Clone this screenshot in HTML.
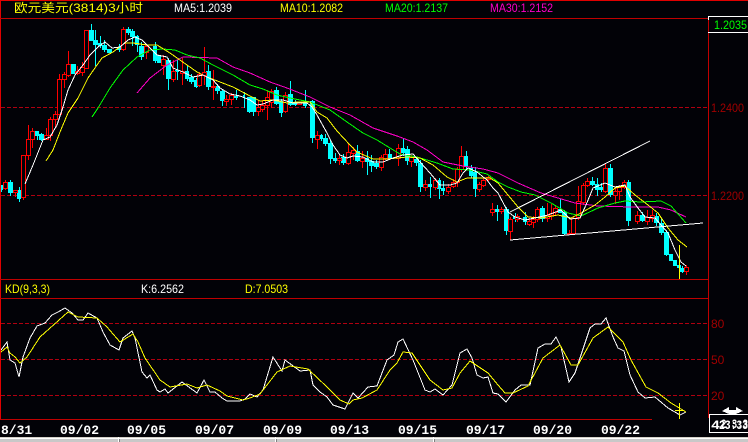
<!DOCTYPE html>
<html><head><meta charset="utf-8"><title>KD</title>
<style>
html,body{margin:0;padding:0;background:#020207;width:748px;height:442px;overflow:hidden}
svg{display:block;position:absolute;left:0;top:0}
text{font-family:"Liberation Sans","Noto Sans CJK SC",sans-serif;font-size:12px}
.d{font-family:"Liberation Mono",monospace;font-weight:bold;font-size:13px;fill:#fff}
</style></head><body>
<svg width="748" height="442" viewBox="0 0 748 442" xmlns="http://www.w3.org/2000/svg" shape-rendering="crispEdges">
<rect width="748" height="442" fill="#020207"/>
<!-- dashed grid -->
<g stroke="#b00010" stroke-width="1" stroke-dasharray="4 2" fill="none">
<path d="M1 107.5H708M1 195.5H708M1 323.5H708M1 359.5H708M1 395.5H708"/>
</g>
<!-- cyan wicks -->
<path fill="none" stroke="#00ffff" d="M1.5 185V192M10.5 180V196M19.5 187V202M37.5 131V140M41.5 133V141M73.5 64V74M91.5 24V41M95.5 30V66M100.5 36V48M104.5 40V52M119.5 44V52M128.5 27V35M132.5 29V46M137.5 35V52M141.5 42V60M155.5 42V63M159.5 55V63M168.5 58V90M177.5 60V80M187.5 65V81M191.5 74V84M196.5 78V88M208.5 65V90M217.5 84V94M222.5 89V106M236.5 90V100M244.5 92V108M249.5 97V113M253.5 101V116M276.5 87V105M281.5 99V117M290.5 81V106M295.5 100V106M305.5 90V108M312.5 100V143M321.5 134V141M325.5 134V146M330.5 140V164M335.5 153V163M343.5 154V165M357.5 145V162M367.5 151V175M371.5 155V172M376.5 160V169M389.5 149V160M403.5 138V156M407.5 146V165M416.5 157V166M420.5 160V192M430.5 177V198M439.5 178V199M443.5 181V195M466.5 151V170M471.5 165V178M475.5 167V197M497.5 205V221M506.5 207V235M515.5 213V222M525.5 212V225M542.5 206V222M560.5 199V213M564.5 210V235M592.5 177V186M597.5 178V196M601.5 183V192M610.5 164V197M628.5 180V226M642.5 212V222M656.5 213V226M661.5 218V235M666.5 230V256M682.5 266V273"/>
<!-- cyan bodies -->
<path fill="#00ffff" d="M1 185h2v5h-2zM8 182h5v11h-5zM17 190h4v9h-4zM35 131h4v5h-4zM39 134h5v6h-5zM71 64h5v10h-5zM89 30h5v11h-5zM93 40h5v5h-5zM98 43h4v3h-4zM102 45h5v5h-5zM107 49h5v4h-5zM117 47h4v3h-4zM126 29h5v4h-5zM130 31h5v6h-5zM135 36h4v9h-4zM139 46h5v11h-5zM153 46h4v15h-4zM157 55h4v8h-4zM166 60h5v19h-5zM175 70h4v2h-4zM185 71h4v8h-4zM189 77h5v5h-5zM194 80h4v7h-4zM206 71h5v16h-5zM215 86h5v5h-5zM220 91h5v10h-5zM234 96h4v2h-4zM243 95h2v2h-2zM247 97h9v15h-9zM274 90h5v14h-5zM279 101h4v12h-4zM288 94h5v11h-5zM293 103h4v2h-4zM303 103h4v3h-4zM310 101h5v37h-5zM319 135h4v4h-4zM323 138h5v6h-5zM328 143h5v16h-5zM333 158h4v3h-4zM341 157h5v6h-5zM355 151h5v10h-5zM365 158h4v4h-4zM369 161h5v5h-5zM374 163h5v4h-5zM387 154h5v5h-5zM401 148h4v5h-4zM405 149h5v12h-5zM414 159h5v4h-5zM418 163h5v24h-5zM428 184h4v3h-4zM437 180h4v9h-4zM441 188h4v3h-4zM464 156h4v11h-4zM469 168h4v8h-4zM473 172h4v17h-4zM495 209h4v3h-4zM504 209h5v22h-5zM513 216h5v3h-5zM523 217h4v5h-4zM540 208h5v11h-5zM558 209h4v4h-4zM562 212h5v22h-5zM590 181h5v4h-5zM595 184h4v6h-4zM599 187h5v3h-5zM608 168h5v27h-5zM626 182h5v39h-5zM640 215h5v6h-5zM654 216h5v7h-5zM659 223h5v10h-5zM664 232h5v23h-5zM669 254h4v7h-4zM673 260h4v6h-4zM677 265h4v3h-4zM680 268h5v4h-5z"/>
<!-- red wicks -->
<path fill="none" stroke="#ff0000" d="M5.5 180V190M15.5 190V197M23.5 155V200M28.5 125V160M32.5 128V148M46.5 128V139M50.5 117V141M55.5 111V127M59.5 74V114M64.5 72V88M68.5 51V77M77.5 66V75M82.5 62V76M86.5 30V68M123.5 27V51M146.5 44V59M163.5 55V75M173.5 60V82M182.5 58V85M199.5 72V87M204.5 47V85M213.5 70V100M226.5 95V106M231.5 93V105M258.5 100V116M262.5 100V112M267.5 90V120M271.5 89V108M285.5 92V113M317.5 131V149M339.5 155V165M348.5 143V165M353.5 147V160M362.5 151V168M381.5 155V171M385.5 149V160M398.5 144V166M411.5 155V167M425.5 180V191M435.5 178V190M448.5 184V194M453.5 179V188M457.5 167V187M461.5 146V172M479.5 182V192M483.5 178V187M488.5 176V181M492.5 203V216M501.5 207V214M510.5 217V240M517.5 214V222M529.5 218V226M533.5 216V228M537.5 207V222M547.5 203V222M551.5 204V220M555.5 205V215M569.5 230V235M573.5 216V235M578.5 186V220M583.5 183V205M587.5 178V187M605.5 163V193M615.5 188V204M619.5 185V200M624.5 180V189M637.5 211V224M647.5 210V225M652.5 210V222M686.5 265V275"/>
<!-- red bodies (hollow, black inside) -->
<path fill="#020207" stroke="#ff0000" d="M3.5 182.500h4v6h-4zM13.500 190.500h4v2h-4zM21.500 155.500h4v42h-4zM26.500 139.500h4v16h-4zM30.500 131.500h4v8h-4zM44.500 135.500h4v4h-4zM48.500 119.500h4v16h-4zM53.500 114.500h4v5h-4zM57.500 79.500h4v35h-4zM62.500 74.500h4v5h-4zM66.500 64.500h4v11h-4zM75.500 71.500h4v2h-4zM80.500 67.500h4v5h-4zM84.500 30.500h4v38h-4zM121.500 29.500h4v20h-4zM144.500 46.500h4v6h-4zM161.500 59.500h4v6h-4zM171.500 71.500h4v8h-4zM180.500 71.500h4v2h-4zM197.500 74.500h4v11h-4zM202.500 72.500h4v3h-4zM211.500 86.500h4v1h-4zM224.500 99.500h4v2h-4zM229.500 95.500h4v4h-4zM256.500 107.500h4v4h-4zM260.500 105.500h4v4h-4zM265.500 97.500h4v8h-4zM269.500 91.500h4v11h-4zM283.500 95.500h4v16h-4zM297.500 102.500h4v2h-4zM315.500 135.500h4v4h-4zM337.500 158.500h4v2h-4zM346.500 152.500h4v11h-4zM351.500 150.500h4v3h-4zM360.500 158.500h4v3h-4zM379.500 157.500h4v10h-4zM383.500 154.500h4v4h-4zM396.500 148.500h4v10h-4zM409.500 157.500h4v4h-4zM423.500 184.500h4v3h-4zM433.500 180.500h4v7h-4zM446.500 187.500h4v4h-4zM451.500 182.500h4v4h-4zM455.500 169.500h4v13h-4zM459.500 156.500h4v13h-4zM477.500 184.500h4v5h-4zM481.500 180.500h4v5h-4zM486.500 177.500h4v2h-4zM490.500 209.500h4v3h-4zM499.500 209.500h4v2h-4zM508.500 219.500h4v12h-4zM515.500 216.500h4v3h-4zM527.500 221.500h4v3h-4zM531.500 219.500h4v3h-4zM535.500 209.500h4v10h-4zM545.500 215.500h4v3h-4zM549.500 213.500h4v2h-4zM553.500 208.500h4v4h-4zM567.500 233.500h4v1h-4zM571.500 218.500h4v15h-4zM576.500 201.500h4v16h-4zM581.500 185.500h4v17h-4zM585.500 181.500h4v4h-4zM603.500 168.500h4v23h-4zM613.500 191.500h4v4h-4zM617.500 187.500h4v4h-4zM622.500 182.500h4v5h-4zM635.500 215.500h4v6h-4zM645.500 217.500h4v4h-4zM650.500 215.500h4v3h-4zM684.500 267.500h4v4h-4z"/>
<!-- moving averages -->
<g fill="none" stroke-width="1">
<polyline stroke="#ff00c8" points="137,93 150,78 167,65 183,57 217,58 233,67 250,73 270,82 287,88 310,97 330,107 350,115 373,128 397,136 413,142 427,150 443,162 463,166 483,169 498,173 518,183 541,193 558,198 575,203 598,206 631,207 658,207 671,210 686,217"/>
<polyline stroke="#00ff00" points="92,117 98,108 110,88 123,70 137,57 150,50 163,49 175,50 187,55 200,58 213,65 233,75 250,85 263,89 277,95 290,98 310,102 330,110 347,122 363,133 377,140 390,148 400,154 417,157 437,163 453,169 470,170 487,174 498,182 508,187 521,192 535,195 551,203 568,213 581,216 598,208 615,203 625,201 641,202 661,201 671,206 686,223"/>
<polyline stroke="#ffff00" points="46,161 53,150 60,132 68,113 78,98 88,78 97,65 102,58 113,52 125,43 133,43 147,45 157,45 170,53 187,65 197,72 207,77 220,82 233,87 250,96 260,101 273,100 287,103 297,102 310,102 317,112 327,118 337,131 350,145 357,152 373,159 387,159 397,158 407,157 420,158 433,165 447,177 457,182 467,178 480,178 490,178 498,183 508,195 518,207 528,217 541,218 558,215 571,218 581,213 595,205 605,197 615,188 625,186 635,195 648,205 658,213 668,228 678,240 687,247"/>
<polyline stroke="#ffffff" points="25,184 33,165 39,150 43,140 50,137 57,125 63,107 68,90 75,75 83,65 90,55 98,47 105,42 112,48 120,47 128,40 135,37 142,40 150,48 157,55 167,57 173,68 183,72 193,77 203,75 213,80 220,88 230,94 240,96 250,100 257,105 263,104 273,100 283,100 293,103 307,103 312,107 317,115 327,133 333,145 340,155 347,158 353,156 363,157 373,162 383,162 393,158 403,155 413,154 420,162 430,173 440,185 450,185 457,183 463,173 468,168 477,172 487,180 493,188 498,193 508,212 515,217 525,220 535,218 548,215 561,210 570,219 580,218 586,205 593,188 605,183 615,187 625,185 630,197 638,208 645,217 655,218 661,225 668,233 675,250 681,262 686,266"/>
<!-- trend lines -->
<path stroke="#ffffff" d="M510 212L650 141M510 240L703 223"/>
<!-- KD -->
<polyline stroke="#ffffff" points="1,350 7,342 10,360 15,363 19,377 23,357 30,338 37,326 45,323 52,315 58,312 65,308 72,313 78,320 83,320 88,313 97,318 103,332 110,345 119,350 123,338 132,331 135,338 142,372 147,378 150,375 157,390 160,392 165,389 168,393 182,382 197,393 204,380 210,392 215,392 222,398 227,401 240,401 245,399 250,394 257,397 263,390 273,357 282,371 285,360 300,371 310,370 313,385 320,392 327,397 333,405 345,409 353,393 358,398 368,387 377,386 387,360 394,355 398,342 403,339 413,360 425,390 430,392 435,389 443,395 452,385 460,353 467,349 472,358 477,375 483,378 488,377 493,393 498,394 506,402 515,390 521,385 530,385 538,348 545,344 551,344 556,337 561,347 569,382 575,373 590,328 595,324 601,324 606,318 613,337 618,348 624,351 630,375 638,392 645,398 655,397 668,408 680,415 686,412"/>
<polyline stroke="#ffff00" points="1,352 7,347 10,353 15,357 20,363 27,357 40,337 68,312 78,317 97,318 107,327 120,342 133,334 138,342 145,358 160,380 170,387 187,384 197,388 207,385 220,391 227,396 243,400 250,398 260,394 277,372 290,366 308,369 327,387 340,400 349,404 353,400 362,398 377,390 390,370 397,363 403,352 412,353 430,380 443,390 452,388 460,373 470,361 488,373 498,385 505,393 513,393 528,386 543,358 560,345 571,365 578,365 593,338 608,327 623,342 631,360 646,387 658,393 671,403 686,412"/>
<!-- cursor -->
<path stroke="#ffff00" d="M679.500 245V280M679.500 403V419M675 410.500H684"/>
</g>
<!-- frame -->
<g stroke="#c00000" fill="none">
<path stroke="#e00000" d="M0 0.500H748M0.500 0V419"/>
<path d="M0 18.500H708M708.500 16V418M0 279.500H708M0 298.500H708M0 419.500H652"/>
</g>
<path stroke="#ffffff" fill="none" d="M708 16.500H748M708 32.500H748M708.500 16V20"/>
<!-- labels -->
<g shape-rendering="auto">
<text x="14" y="12" fill="#ffff00" font-size="12" textLength="129" lengthAdjust="spacingAndGlyphs">欧元美元(3814)3小时</text>
<text x="174" y="12" fill="#ffffff" textLength="58" lengthAdjust="spacingAndGlyphs">MA5:1.2039</text>
<text x="280" y="12" fill="#ffff00" textLength="63" lengthAdjust="spacingAndGlyphs">MA10:1.2082</text>
<text x="385" y="12" fill="#00ff00" textLength="63" lengthAdjust="spacingAndGlyphs">MA20:1.2137</text>
<text x="490" y="12" fill="#ff00c8" textLength="63" lengthAdjust="spacingAndGlyphs">MA30:1.2152</text>
<text x="714" y="29" fill="#00ff00" textLength="33" lengthAdjust="spacingAndGlyphs">1.2035</text>
<text x="711" y="112" fill="#a00000" textLength="33" lengthAdjust="spacingAndGlyphs">1.2400</text>
<text x="711" y="200" fill="#a00000" textLength="33" lengthAdjust="spacingAndGlyphs">1.2200</text>
<text x="711" y="328" fill="#a00000">80</text>
<text x="711" y="364" fill="#a00000">50</text>
<text x="711" y="400" fill="#a00000">20</text>
<text x="5" y="293" fill="#ffff00" textLength="45" lengthAdjust="spacingAndGlyphs">KD(9,3,3)</text>
<text x="141" y="293" fill="#ffffff" textLength="43" lengthAdjust="spacingAndGlyphs">K:6.2562</text>
<text x="245" y="293" fill="#ffff00" textLength="43" lengthAdjust="spacingAndGlyphs">D:7.0503</text>
<text class="d" x="1" y="434">8/31</text>
<text class="d" x="60" y="434">09/02</text>
<text class="d" x="127" y="434">09/05</text>
<text class="d" x="195" y="434">09/07</text>
<text class="d" x="263" y="434">09/09</text>
<text class="d" x="330" y="434">09/13</text>
<text class="d" x="398" y="434">09/15</text>
<text class="d" x="466" y="434">09/17</text>
<text class="d" x="533" y="434">09/20</text>
<text class="d" x="601" y="434">09/22</text>
</g>
<!-- bottom-right box -->
<rect x="709.500" y="414.500" width="39" height="18" fill="#020207" stroke="#ffffff"/>
<g shape-rendering="auto">
<text class="d" x="711" y="429" textLength="9" lengthAdjust="spacingAndGlyphs">4</text>
<text class="d" x="719" y="429" textLength="29" lengthAdjust="spacingAndGlyphs">23:33</text>
<text class="d" x="721" y="428" textLength="27" lengthAdjust="spacingAndGlyphs">2:3:3</text>
</g>
<path fill="#ffffff" d="M722 411L729 407V410H736V407L743 411L736 414H729z"/>
<!-- bottom bar -->
<rect x="0" y="437" width="748" height="1" fill="#d4d0c8"/>
<rect x="0" y="438" width="748" height="1" fill="#ffffff"/>
<rect x="0" y="439" width="748" height="3" fill="#c8c8c8"/>
<path stroke="#ffffff" d="M118.500 437V442M275.500 437V442M433.500 437V442"/>
<path stroke="#808080" d="M119.500 439V442M276.500 439V442M434.500 439V442"/>
</svg>
</body></html>
